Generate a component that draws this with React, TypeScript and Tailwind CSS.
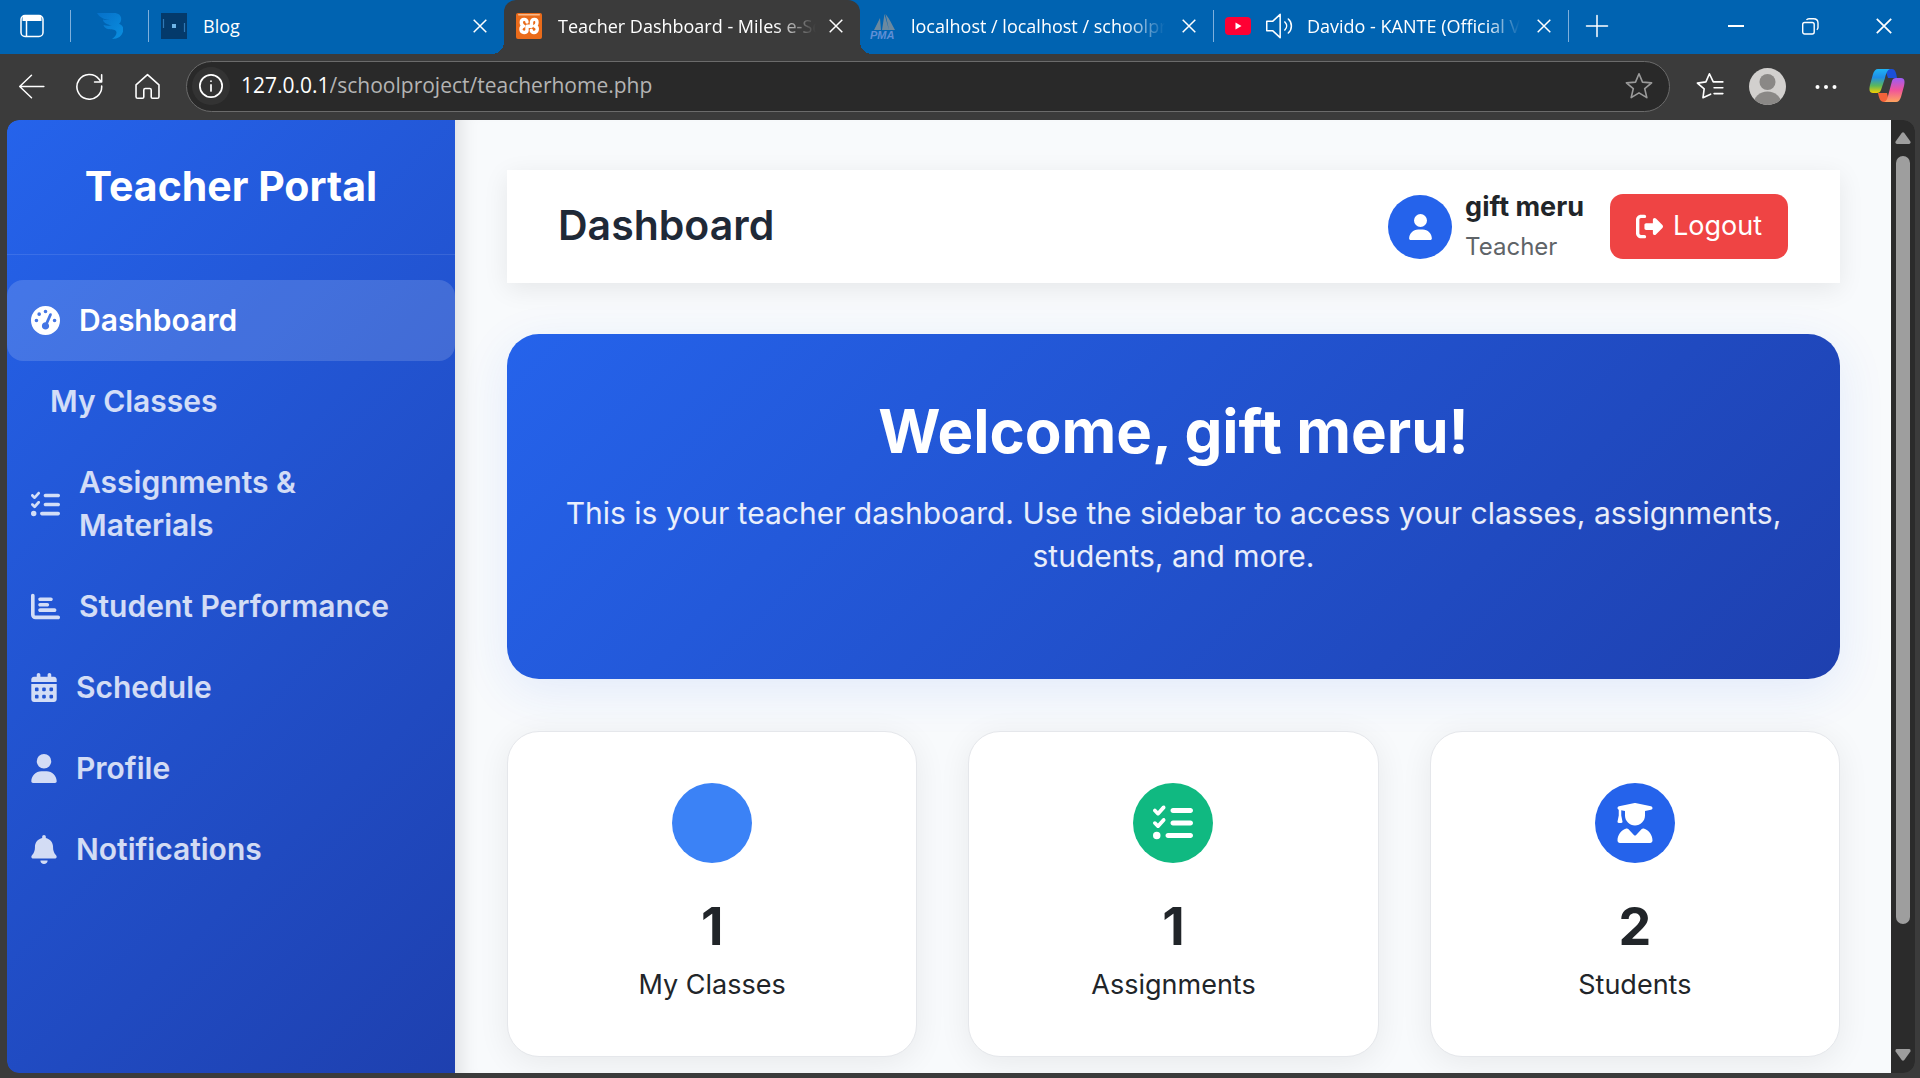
import type { ReactNode } from "react";
import {
  FaBell,
  FaCalendarDays,
  FaChartBar,
  FaGaugeHigh,
  FaListCheck,
  FaRightFromBracket,
  FaUser,
  FaUserGraduate,
} from "react-icons/fa6";

/* ---------- browser chrome icons ---------- */

function Stroke({ className, children, width = 1.6 }: { className: string; children: ReactNode; width?: number }) {
  return (
    <svg
      viewBox="0 0 24 24"
      className={className}
      fill="none"
      stroke="currentColor"
      strokeWidth={width}
      strokeLinecap="round"
      strokeLinejoin="round"
      aria-hidden="true"
    >
      {children}
    </svg>
  );
}

const Cross = ({ className = "size-4" }: { className?: string }) => (
  <svg viewBox="0 0 14 14" className={className} stroke="currentColor" strokeWidth="1.5" aria-hidden="true">
    <path d="M0.7 0.7 13.3 13.3M13.3 0.7 0.7 13.3" />
  </svg>
);

const BirdIcon = () => (
  <svg viewBox="0 0 26 26" className="size-[26px]" aria-hidden="true">
    <defs>
      <linearGradient id="bird" x1="0" y1="0" x2="1" y2="1">
        <stop offset="0" stopColor="#0670c8" />
        <stop offset="1" stopColor="#0a8fe0" />
      </linearGradient>
    </defs>
    <path
      fill="url(#bird)"
      d="M0 0H17C22 0 25 3 24 7.500C23.700 9 23 10 22 10.700C25.500 12 27 15 26 18.500C25 23 21 26 15 26C18.500 23.500 20.500 20.500 19 18C17.800 16.300 14 16.500 11 16C8.500 15.500 7 14 6.500 12C9 12.800 12 12.700 15 12.500C12 12 8.500 11 7 9C5.800 7.500 6 6.700 6 6.500C8.500 7.300 11 7 13 7C8 6.500 3 5 0 0Z"
    />
  </svg>
);

const BlogIcon = () => (
  <svg viewBox="0 0 26 26" className="size-[26px] shrink-0" aria-hidden="true">
    <rect width="26" height="26" fill="#043a6b" />
    <path d="M2.500 6V15M23.500 10V19" stroke="#2f78b5" strokeWidth="1.200" />
    <rect x="11" y="11" width="4" height="4" fill="#6fb4e6" />
  </svg>
);

const XamppIcon = () => (
  <svg viewBox="0 0 26 26" className="size-[26px] shrink-0" aria-hidden="true">
    <rect width="26" height="26" rx="2" fill="#ea6b1a" />
    <rect x="2" y="1" width="22" height="1.500" rx="0.700" fill="#f8b98a" />
    <path
      fill="none"
      stroke="#fff"
      strokeWidth="3.400"
      strokeLinecap="round"
      strokeLinejoin="round"
      d="M11 9C11 5.500 5.300 5.500 5.300 9.300C5.300 11.500 6.500 12.600 7.500 13C5.500 13.500 4.800 15 5 16.800C5.500 20.500 10.700 20 11 17.200V13.200H15.500V9C16 5.500 21 5.500 21 9.200C21 11.500 19.800 12.600 18.800 13C20.800 13.500 21.500 15 21.200 16.800C20.500 20.500 15.300 20.300 15.300 17.200"
    />
  </svg>
);

const PmaIcon = () => (
  <svg viewBox="0 0 27 27" className="size-[27px] shrink-0" aria-hidden="true">
    <path d="M14.500 1 12 17H19ZM15.500 1C20 6 22 12 25 17H19ZM10 5 4 17H11Z" fill="#7f8f9c" opacity="0.85" />
    <text x="0" y="26" fontFamily="Liberation Sans, sans-serif" fontWeight="700" fontStyle="italic" fontSize="11" fill="#5f8fd6">
      PMA
    </text>
  </svg>
);

const CopilotIcon = () => (
  <svg viewBox="0 0 36 34" className="h-[34px] w-9" aria-hidden="true">
    <defs>
      <linearGradient id="cpA" x1="0" y1="0" x2="0" y2="1">
        <stop offset="0" stopColor="#1fb4f4" />
        <stop offset="0.350" stopColor="#1f8de6" />
        <stop offset="0.700" stopColor="#5cb85a" />
        <stop offset="1" stopColor="#f5d000" />
      </linearGradient>
      <linearGradient id="cpB" x1="0" y1="0" x2="0" y2="1">
        <stop offset="0" stopColor="#9b5cf6" />
        <stop offset="0.500" stopColor="#f0539b" />
        <stop offset="1" stopColor="#ffa45e" />
      </linearGradient>
    </defs>
    <path d="M16 0H23C26 0 27 3 28 9H19Z" fill="#1b50d8" />
    <path d="M9 24H18L20 33H15C11 33 10 29 9 24Z" fill="#f4623a" />
    <path d="M9 0H21C18 1 17 5 16 9L12 21C11.300 23 10 24 8 24H4C0 24 0 20 1 16L4 5C5 2 6.500 0 9 0Z" fill="url(#cpA)" />
    <path d="M27 33H15C18 32 18.500 29 19.500 25L23 12C23.500 10 25 9 27 9H32C36 9 36 13 35 17L32 28C31 31 29.500 33 27 33Z" fill="url(#cpB)" />
  </svg>
);

/* ---------- browser chrome ---------- */

const FADE = "[mask-image:linear-gradient(to_right,#000_84%,transparent)]";
const TabRule = () => <span className="h-8 w-px shrink-0 bg-[#7fb0dc]" />;

function CloseTab({ title }: { title: string }) {
  return (
    <button type="button" aria-label={`Close ${title}`} className="flex size-6 shrink-0 items-center justify-center">
      <Cross className="size-[14px]" />
    </button>
  );
}

function TabStrip() {
  return (
    <div className="flex h-[54px] items-center bg-[#0063b1] pb-[2px] text-[18px] leading-6 text-white">
      <button type="button" aria-label="Tab actions" className="flex w-[70px] justify-center pr-[6px]">
        <svg viewBox="0 0 24 24" className="size-6" fill="none" stroke="currentColor" strokeWidth="1.500" aria-hidden="true">
          <rect x="1" y="1.500" width="22" height="21" rx="4" />
          <path d="M2.500 4.500H21.500" strokeWidth="5" />
          <path d="M6.500 7V22" />
        </svg>
      </button>
      <TabRule />
      <button type="button" aria-label="Pinned tab" className="flex w-[77px] justify-center">
        <BirdIcon />
      </button>
      <TabRule />
      <div className="flex w-[355px] items-center pr-3 pl-3">
        <BlogIcon />
        <span className="ml-4 flex-1">Blog</span>
        <CloseTab title="Blog" />
      </div>
      <div className="relative -mb-[2px] flex w-[356px] items-center self-stretch rounded-t-xl bg-[#3b3b3b] pr-3 pb-[2px] pl-3">
        <span className="absolute bottom-0 -left-3 size-3 bg-[radial-gradient(circle_at_0_0,transparent_12px,#3b3b3b_12px)]" />
        <span className="absolute -right-3 bottom-0 size-3 bg-[radial-gradient(circle_at_100%_0,transparent_12px,#3b3b3b_12px)]" />
        <XamppIcon />
        <span className={`mr-2 ml-4 flex-1 overflow-hidden whitespace-nowrap ${FADE}`}>Teacher Dashboard - Miles e-School</span>
        <CloseTab title="Teacher Dashboard" />
      </div>
      <div className="flex w-[353px] items-center pr-3 pl-[10px]">
        <PmaIcon />
        <span className={`mr-3 ml-[14px] flex-1 overflow-hidden whitespace-nowrap ${FADE}`}>localhost / localhost / schoolproject</span>
        <CloseTab title="localhost" />
      </div>
      <TabRule />
      <div className="flex w-[354px] items-center pr-3 pl-[11px]">
        <svg viewBox="0 0 26 22" className="w-[26px] shrink-0" aria-hidden="true">
          <rect y="2" width="26" height="18" rx="4" fill="#ff0033" />
          <path d="M10.500 7.500V14.500L16.500 11Z" fill="#fff" />
        </svg>
        <Stroke className="ml-[14px] size-7 shrink-0" width={1.3}>
          <path d="M1.500 8H6.500L13 2V22L6.500 16H1.500ZM17 8.500C19 10.500 19 13.500 17 15.500M20 6C23.500 9 23.500 15 20 18" />
        </Stroke>
        <span className={`mr-3 ml-[14px] flex-1 overflow-hidden whitespace-nowrap ${FADE}`}>Davido - KANTE (Official Video)</span>
        <CloseTab title="Davido - KANTE" />
      </div>
      <TabRule />
      <button type="button" aria-label="New tab" className="ml-4">
        <Stroke className="size-6" width={1.5}>
          <path d="M12 1.500V22.500M1.500 12H22.500" />
        </Stroke>
      </button>
      <div className="ml-auto flex items-center">
        <button type="button" aria-label="Minimize" className="flex h-12 w-[74px] items-center justify-center">
          <span className="h-[2px] w-4 bg-white" />
        </button>
        <button type="button" aria-label="Restore" className="flex h-12 w-[74px] items-center justify-center">
          <svg viewBox="0 0 17 17" className="size-[17px]" fill="none" stroke="currentColor" strokeWidth="1.400" aria-hidden="true">
            <rect x="0.700" y="4.500" width="11.500" height="11.500" rx="2" />
            <path d="M4.500 2C5 1.200 6 0.800 7 0.800H11.500C14.300 0.800 16 2.700 16 5V9.500C16 10.500 15.500 11.300 14.800 11.800" />
          </svg>
        </button>
        <button type="button" aria-label="Close window" className="flex h-12 w-[73px] items-center justify-center">
          <Cross className="size-4" />
        </button>
      </div>
    </div>
  );
}

const STAR = "M12 1.500 15 8.700 22.800 9.300 16.900 14.300 18.700 22 12 17.900 5.300 22 7.100 14.300 1.200 9.300 9 8.700Z";

function Toolbar() {
  return (
    <div className="flex h-[66px] items-center pr-[15px] pb-[2px] pl-[18px] text-white">
      <button type="button" aria-label="Back" className="mr-[31px]">
        <Stroke className="size-[27px]" width={1.3}>
          <path d="M23 12H1.500M12 2 1.500 12 12 22" />
        </Stroke>
      </button>
      <button type="button" aria-label="Refresh" className="mr-[31px]">
        <Stroke className="size-[27px]" width={1.4}>
          <path d="M22.800 11.500A11 11 0 1 1 20.500 5.500L22.500 8M22.800 1.500V8H16.500" />
        </Stroke>
      </button>
      <button type="button" aria-label="Home" className="mr-[25px]">
        <Stroke className="size-[27px]" width={1.4}>
          <path d="M1.800 10.500 12 1.500 22.200 10.500V21Q22.200 22.500 20.700 22.500H16.500Q15.300 22.500 15.300 21.300V15Q15.300 13.800 14 13.800H10Q8.700 13.800 8.700 15V21.300Q8.700 22.500 7.500 22.500H3.300Q1.800 22.500 1.800 21Z" />
        </Stroke>
      </button>
      <div className="flex h-[51px] flex-1 items-center rounded-full border border-[#6b6b6b] bg-[#292929] pr-4 pl-[5px]">
        <button type="button" aria-label="Site information" className="flex size-[38px] items-center justify-center rounded-full bg-[#333]">
          <Stroke className="size-[26px]" width={1.6}>
            <circle cx="12" cy="12" r="10.300" />
            <path d="M12 11V16.500M12 7.500V7.600" />
          </Stroke>
        </button>
        <label htmlFor="url" className="ml-[11px] text-[21px]">
          127.0.0.1
        </label>
        <input id="url" defaultValue="/schoolproject/teacherhome.php" className="min-w-0 flex-1 bg-transparent text-[21px] text-[#b4b4b4] outline-none" />
        <button type="button" aria-label="Add to favorites" className="text-[#9a9a9a]">
          <Stroke className="size-7" width={1.4}>
            <path d={STAR} />
          </Stroke>
        </button>
      </div>
      <button type="button" aria-label="Favorites" className="ml-[26px]">
        <Stroke className="size-7" width={1.4}>
          <path d="M12.500 19 6 22 7 14.500 1.200 9.500 8.500 8.500 11.500 1.500 14.800 8.500H23M15.500 13.500H23M15.500 18.500H23" />
        </Stroke>
      </button>
      <button type="button" aria-label="Account" className="ml-[25px]">
        <svg viewBox="0 0 37 37" className="size-[37px]" aria-hidden="true">
          <defs>
            <clipPath id="acct">
              <circle cx="18.500" cy="18.500" r="18.500" />
            </clipPath>
          </defs>
          <g clipPath="url(#acct)">
            <rect width="37" height="37" fill="#d2d0ce" />
            <circle cx="18.500" cy="14" r="8" fill="#8a8886" />
            <ellipse cx="18.500" cy="36" rx="14" ry="12.500" fill="#8a8886" />
          </g>
        </svg>
      </button>
      <button type="button" aria-label="Settings and more" className="ml-7">
        <svg viewBox="0 0 24 24" className="size-6" fill="currentColor" aria-hidden="true">
          <circle cx="3.500" cy="13" r="2" />
          <circle cx="12" cy="13" r="2" />
          <circle cx="20.500" cy="13" r="2" />
        </svg>
      </button>
      <button type="button" aria-label="Copilot" className="ml-[31px]">
        <CopilotIcon />
      </button>
    </div>
  );
}

function Scrollbar() {
  return (
    <div className="flex w-6 shrink-0 flex-col items-center rounded-r-xl bg-[#2b2b2b] pt-3 pb-3" aria-hidden="true">
      <svg viewBox="0 0 16 12" className="w-4" fill="#9e9e9e">
        <path d="M6.700 1Q8 -0.600 9.300 1L15.400 9.500Q16 12 14 12H2Q0 12 0.600 9.500Z" />
      </svg>
      <div className="mt-3 mb-[125px] w-[14px] flex-1 rounded-full bg-[#9e9e9e]" />
      <svg viewBox="0 0 16 12" className="w-4 rotate-180" fill="#9e9e9e">
        <path d="M6.700 1Q8 -0.600 9.300 1L15.400 9.500Q16 12 14 12H2Q0 12 0.600 9.500Z" />
      </svg>
    </div>
  );
}

/* ---------- page ---------- */

const NAV = [
  { label: "Dashboard", icon: <FaGaugeHigh className="h-[29px] w-[29px]" />, active: true },
  { label: "My Classes", icon: null },
  { label: "Assignments & Materials", icon: <FaListCheck className="h-[29px] w-[29px]" /> },
  { label: "Student Performance", icon: <FaChartBar className="h-[29px] w-[29px]" /> },
  { label: "Schedule", icon: <FaCalendarDays className="h-[29px] w-[26px]" /> },
  { label: "Profile", icon: <FaUser className="h-[29px] w-[26px]" /> },
  { label: "Notifications", icon: <FaBell className="h-[29px] w-[26px]" /> },
];

function Sidebar() {
  return (
    <aside className="w-[448px] shrink-0 rounded-l-xl bg-[linear-gradient(135deg,#2563eb,#1e40af)]">
      <div className="border-b border-white/10 px-6 pt-9 pb-[38px] text-center">
        <h3 className="text-[41px] leading-[60px] font-bold text-white">Teacher Portal</h3>
      </div>
      <nav className="mt-[25px]">
        {NAV.map((item) => (
          <a
            key={item.label}
            href="#"
            className={`flex items-center gap-[19px] rounded-2xl py-[19px] pr-12 pl-6 text-[30px] leading-[43px] font-semibold ${
              item.active ? "bg-white/15 text-white" : "text-white/80"
            }`}
          >
            <span className="shrink-0">{item.icon}</span>
            {item.label}
          </a>
        ))}
      </nav>
    </aside>
  );
}

function StatCard({ color, icon, value, label }: { color: string; icon?: ReactNode; value: number; label: string }) {
  return (
    <section className="flex flex-col items-center rounded-[32px] border border-[#e5e7eb] bg-white px-6 pt-[51px] pb-[50px] shadow-[0_6px_32px_rgba(0,0,0,0.07)]">
      <div className={`flex size-20 items-center justify-center rounded-full text-white ${color}`}>{icon}</div>
      <div className="mt-8 text-[52px] leading-[64px] font-bold">{value}</div>
      <div className="mt-1 text-[27px] leading-[43px]">{label}</div>
    </section>
  );
}

function Page() {
  return (
    <div className="mr-[5px] mb-[5px] ml-[7px] flex flex-1 overflow-hidden rounded-xl font-[Inter,'Noto_Sans',sans-serif] text-[#212529]">
      <Sidebar />
      <main className="min-w-0 flex-1 bg-[#f8fafc] pt-[50px] pr-[51px] pb-4 pl-[52px] shadow-[inset_20px_0_18px_-14px_rgba(0,0,0,0.1)]">
        <header className="flex min-h-[113px] items-center bg-white pr-[52px] pl-[51px] shadow-[0_6px_24px_rgba(0,0,0,0.08)]">
          <h2 className="flex-1 pb-1 text-[41px] leading-[48px] font-semibold text-[#1f2937]">Dashboard</h2>
          <div className="flex size-16 items-center justify-center rounded-full bg-[#2563eb] text-white">
            <FaUser className="h-[26px] w-[23px]" />
          </div>
          <div className="mr-[26px] ml-[13px]">
            <div className="text-[27px] leading-10 font-bold">gift meru</div>
            <div className="text-[24px] leading-10 text-[#5f6468]">Teacher</div>
          </div>
          <button type="button" className="flex h-[65px] items-center gap-[10px] rounded-[13px] bg-[#ef4444] px-[26px] text-[27px] text-white">
            <FaRightFromBracket className="size-[27px]" />
            Logout
          </button>
        </header>

        <section className="mt-[51px] rounded-[32px] bg-[linear-gradient(135deg,#2563eb,#1e40af)] px-[51px] pt-[59px] pb-[101px] text-center text-white shadow-[0_12px_48px_rgba(37,99,235,0.1)]">
          <h1 className="text-[60px] leading-[76px] font-bold">Welcome, gift meru!</h1>
          <p className="mt-[23px] text-[30px] leading-[43px] text-white/90">
            This is your teacher dashboard. Use the sidebar to access your classes, assignments, students, and more.
          </p>
        </section>

        <div className="mt-[52px] grid grid-cols-3 gap-[51px]">
          <StatCard color="bg-[#3b82f6]" value={1} label="My Classes" />
          <StatCard color="bg-[#10b981]" icon={<FaListCheck className="size-10" />} value={1} label="Assignments" />
          <StatCard color="bg-[#2563eb]" icon={<FaUserGraduate className="h-10 w-9" />} value={2} label="Students" />
        </div>
      </main>
      <Scrollbar />
    </div>
  );
}

export default function App() {
  return (
    <div className="flex min-h-screen flex-col bg-[#3b3b3b] font-['Open_Sans','Noto_Sans',sans-serif]">
      <TabStrip />
      <Toolbar />
      <Page />
    </div>
  );
}
